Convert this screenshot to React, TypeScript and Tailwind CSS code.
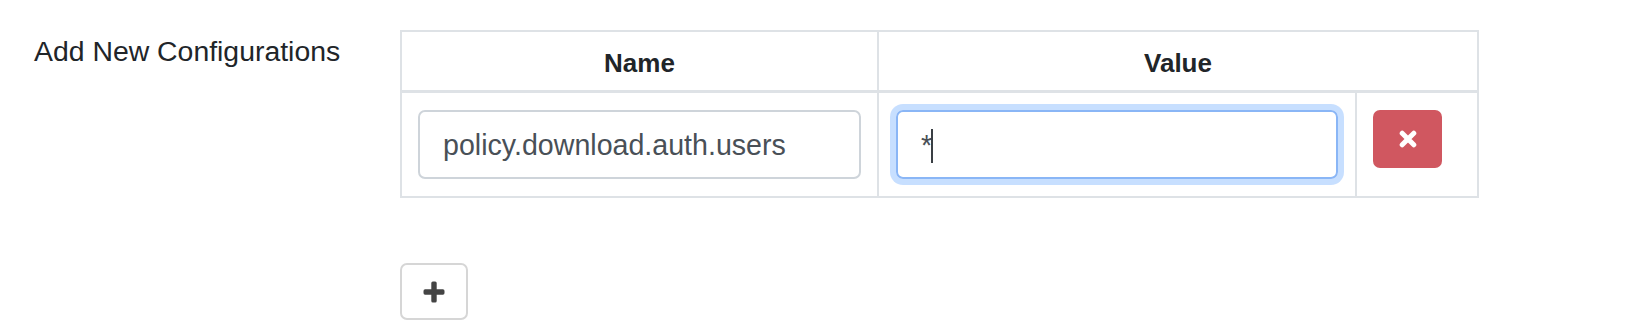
import React from "react";

export default function App() {
  return (
    <div className="w-[1638px] h-[330px] bg-white flex pt-[30px] font-['Liberation_Sans',Arial,sans-serif] text-[#212529]">
      <div className="w-[400px] pl-[34px] text-[28.4px] leading-[42px]">Add New Configurations</div>
      <div className="flex flex-col">
        <div className="w-[1079px] border-2 border-[#dee2e6]">
          <div className="flex h-[61px] border-b-[3px] border-[#dee2e6]">
            <div className="w-[477px] border-r-2 border-[#dee2e6] flex items-center justify-center pt-[4px] font-bold text-[26px] leading-[37px]">
              Name
            </div>
            <div className="flex-1 flex items-center justify-center pt-[4px] font-bold text-[26px] leading-[37px]">
              Value
            </div>
          </div>
          <div className="flex h-[103px]">
            <div className="w-[477px] border-r-2 border-[#dee2e6] pl-[16px] pt-[17px]">
              <div className="w-[443px] h-[69px] border-2 border-[#ced4da] rounded-[7px] flex items-center pl-[23px] text-[28.6px] leading-[42px] text-[#495057]">
                policy.download.auth.users
              </div>
            </div>
            <div className="w-[478px] border-r-2 border-[#dee2e6] pl-[17px] pt-[17px]">
              <div className="w-[442px] h-[69px] border-2 border-[#8ab6f6] rounded-[7px] shadow-[0_0_0_6px_rgba(0,110,255,0.22)] flex items-center pl-[23px] text-[28.6px] leading-[42px] text-[#495057]">
                <span>*</span>
                <span className="inline-block w-[2px] h-[34px] bg-[#3a3f44] ml-[-1px] mt-[3px]"></span>
              </div>
            </div>
            <div className="flex-1 pl-[16px] pt-[17px]">
              <button className="w-[69px] h-[58px] rounded-[7px] bg-[#d05760] flex items-center justify-center">
                <svg width="18" height="18" viewBox="0 0 18 18">
                  <path d="M3.2 3.2 L14.8 14.8 M14.8 3.2 L3.2 14.8" stroke="#ffffff" strokeWidth="5" strokeLinecap="round" fill="none" />
                </svg>
              </button>
            </div>
          </div>
        </div>
        <button className="mt-[65px] w-[68px] h-[57px] border-2 border-[#d6d6d6] rounded-[7px] bg-white flex items-center justify-center">
          <svg width="22" height="22" viewBox="0 0 22 22">
            <rect x="8.3" y="0.5" width="5.4" height="21" rx="1.6" fill="#444444" />
            <rect x="0.5" y="8.3" width="21" height="5.4" rx="1.6" fill="#444444" />
          </svg>
        </button>
      </div>
    </div>
  );
}
